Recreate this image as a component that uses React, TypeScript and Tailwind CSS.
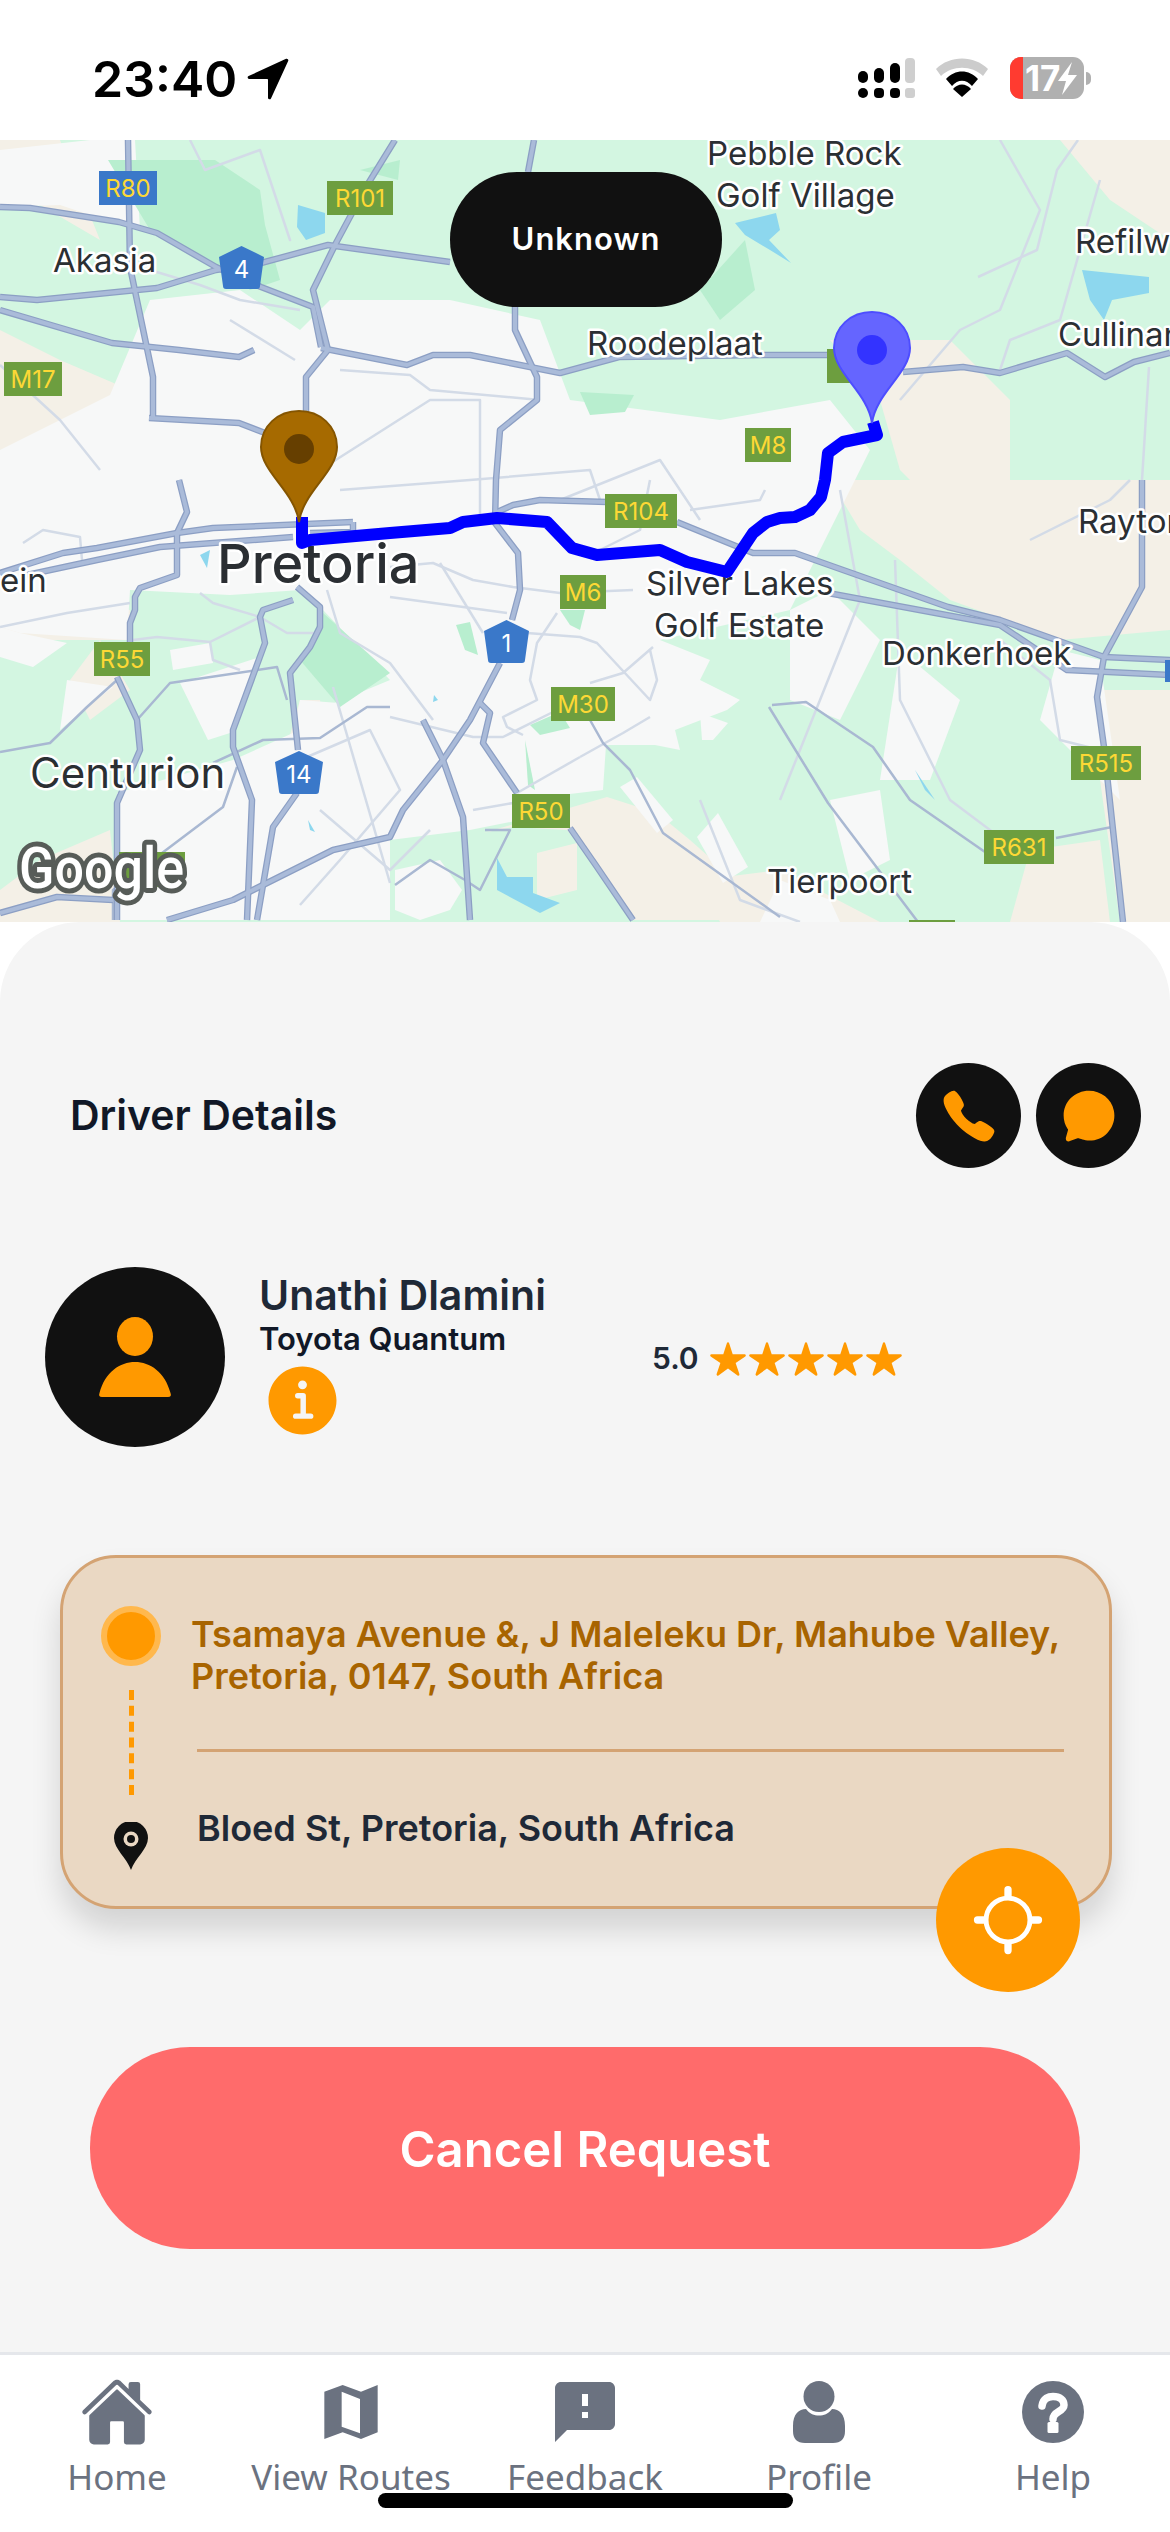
import { IoCall, IoChatbubble, IoHome, IoInformationCircle, IoLocateOutline, IoNavigate, IoStar } from "react-icons/io5";
import { MdFeedback } from "react-icons/md";

const ORANGE = "#ff9900";

const tan = [
  "0,140 60,140 100,240 40,205 0,207",
  "0,330 60,360 130,390 110,430 0,450",
  "830,340 950,340 1010,400 1010,520 950,520 900,470 880,400",
  "1060,140 1170,140 1170,240 1110,200",
  "830,480 1170,480 1170,630 1060,640 950,600 900,560 860,530",
  "1100,690 1170,690 1170,922 1120,922 1100,780",
  "1030,850 1100,840 1110,922 1010,922",
  "483,833 607,797 657,813 690,840 743,887 780,920 633,920 597,867 567,830 513,827",
  "537,853 577,843 577,890 537,900",
  "700,880 780,870 880,922 720,922",
  "390,700 423,720 423,800 390,813",
  "540,720 590,720 600,790 560,790",
  "0,500 137,500 137,520 0,520",
  "0,625 90,605 130,610 130,640 0,640",
  "100,640 130,690 90,720 70,680",
  "40,860 110,830 120,922 0,922 0,890",
  "300,700 320,700 325,725 290,735",
];
const urban = [
  "0,150 90,140 135,140 140,230 120,225 60,205 0,207",
  "0,450 110,395 150,300 240,290 300,330 330,300 450,300 540,320 570,400 720,420 830,400 870,450 790,610 660,640 710,660 700,680 740,700 727,710 675,730 680,750 705,755 655,745 606,745 603,790 520,800 520,820 470,830 390,840 390,707 330,705 390,680 323,610 300,590 230,595 130,590 127,640 20,633 0,627",
  "300,700 390,707 390,920 117,920 117,793 233,760 293,733",
  "170,650 210,643 213,663 173,670",
  "180,683 260,657 230,733 208,740",
  "67,680 113,687 87,707 60,730",
  "0,627 20,633 67,643 33,667 0,657",
  "395,870 440,860 462,890 450,910 420,920 395,910",
  "700,713 728,723 713,740 702,740",
  "697,837 718,813 748,867 723,883",
  "620,787 637,777 673,820 657,833",
  "790,610 830,590 880,640 840,720 790,700",
  "900,650 960,700 930,780 880,780",
  "1060,650 1100,660 1120,800 1040,720",
  "830,800 880,790 890,860 850,880",
  "780,880 830,900 840,922 760,922",
];
const deepGreen = [
  "108,160 215,160 260,190 265,225 280,280 250,290 210,260 150,230",
  "700,290 745,240 755,290 720,320",
  "323,613 390,673 340,707 300,660",
  "580,392 634,395 625,412 590,415",
  "456,625 470,622 478,655 465,650",
  "560,610 585,610 580,630 570,625",
  "530,725 560,712 570,728 540,735",
  "525,740 535,790 528,785",
  "360,170 400,160 398,180",
];
const water = [
  "298,205 325,213 325,233 306,240 297,227",
  "735,223 776,213 780,230 769,240 791,263 770,250 745,235",
  "1082,270 1149,277 1149,293 1112,300 1104,320 1090,300",
  "497,858 507,877 533,877 533,893 560,903 540,913 497,890",
  "915,770 935,800 925,790",
  "200,555 210,550 207,568",
  "434,695 438,700 433,702",
  "308,820 315,832 310,830",
];
const mainRoads = [
  "0,207 30,208 119,222 157,233 216,267 261,287 313,307 321,347",
  "0,297 37,300 157,288 216,270 261,263 328,245 450,262",
  "128,140 130,267 153,377 153,417",
  "0,310 112,343 179,350 239,357 254,350",
  "149,418 239,423 265,433",
  "321,348 407,365 433,355 470,355 560,373 619,357 769,355 843,355",
  "903,372 963,367 1000,373 1067,353 1105,377 1134,362 1170,353",
  "515,307 515,330 537,377 537,400 500,430 496,480 495,523 518,553 520,590 512,620",
  "500,663 470,720 443,760 403,810 390,837 333,850 233,900 167,920",
  "423,720 443,760 463,817 470,920",
  "534,140 528,172",
  "395,140 366,187 336,243 313,290 328,350 306,377 306,413",
  "0,573 63,553 97,548 177,533 213,528 353,522",
  "27,575 97,560 160,547 293,537",
  "353,522 353,532 310,533",
  "495,513 513,505 540,500 607,502",
  "677,522 753,553 795,553 843,570 948,607 1000,620 1104,657 1170,660",
  "828,593 1000,625 1067,670 1170,675",
  "179,480 187,512 177,533 177,575 140,588 135,597 135,610 130,623 130,643",
  "117,677 137,720 140,750 117,803 117,920",
  "293,600 263,610 260,617 265,643 233,730 233,747 252,800 247,920",
  "297,587 320,607 320,627 310,647 290,673 298,750",
  "297,793 273,827 257,920",
  "480,703 490,713 483,743 517,793",
  "570,828 597,867 633,920",
  "1142,480 1142,587 1104,657 1097,697 1104,747 1123,922",
  "0,913 57,897 113,900",
];
const mediumRoads = [
  "117,680 87,707 50,743 0,752",
  "137,720 170,683 277,667 287,700",
  "213,763 263,740 320,738 367,707 390,707",
  "237,767 223,807 170,847 113,890 113,920",
  "772,705 806,702 873,747 910,800 985,852",
  "590,720 603,743 630,770 663,833 780,917",
  "769,707 828,803 918,922",
  "1112,827 1056,838",
  "485,830 510,830 480,890 465,880 430,860 395,885",
];
const thinRoads = [
  "978,277 1037,250 1057,170 1078,140",
  "1149,367 1142,480",
  "150,270 200,285 240,300 300,310",
  "230,320 295,360",
  "340,370 410,375 430,390 540,400",
  "190,140 205,170 260,150 290,240 270,180",
  "320,470 430,400 480,400 480,520",
  "340,490 470,480 590,470 600,500",
  "560,500 660,460 700,520",
  "0,627 67,613 130,603",
  "133,640 157,637 210,642 213,660 240,670",
  "210,642 260,617",
  "200,593 213,603 260,617 287,633 317,633",
  "23,543 43,530 80,537 82,560",
  "327,590 340,633 390,663 433,720",
  "333,687 390,883",
  "390,567 433,563 473,580 513,587 560,593 633,590",
  "440,563 483,633",
  "390,597 507,613",
  "527,633 580,637 597,643 650,700 657,680 650,650",
  "557,613 537,643 530,680 537,700 503,717 507,727 523,735",
  "390,717 473,737 503,737 557,710",
  "590,683 623,673 653,647",
  "580,757 623,733 650,717",
  "517,793 580,757",
  "473,810 513,803",
  "300,760 370,730 400,790 340,860 300,905",
  "320,810 390,870 430,830",
  "690,510 760,500 765,490",
  "650,480 640,530 600,550",
  "840,490 860,600 780,800",
  "1000,140 1040,210 1000,310 960,330 900,400",
  "1000,370 1010,340 1060,320 1100,180",
  "1030,540 1110,500 1130,480",
  "895,560 900,700 950,800 1030,860",
  "1000,640 1050,680 1060,740 1100,750",
  "0,365 60,420 100,470",
  "700,800 740,900 800,922",
];
const labels: [string, number, number, number?, number?][] = [
  ["Pebble Rock", 707, 165],
  ["Golf Village", 716, 207],
  ["Akasia", 53, 272],
  ["Refilw", 1075, 253],
  ["Roodeplaat", 587, 355],
  ["Cullinan", 1058, 346],
  ["Rayton", 1078, 533],
  ["Pretoria", 217, 583, 54, 500],
  ["ein", 0, 592],
  ["Silver Lakes", 646, 595],
  ["Golf Estate", 654, 637],
  ["Donkerhoek", 882, 665],
  ["Centurion", 30, 788, 42],
  ["Tierpoort", 767, 893],
];
const badges: [string, number, number, number, boolean?][] = [
  ["R80", 99, 171, 58, true],
  ["R101", 327, 181, 66],
  ["M17", 4, 362, 58],
  ["M8", 745, 428, 46],
  ["R104", 605, 494, 72],
  ["M6", 560, 575, 46],
  ["R55", 94, 642, 56],
  ["M30", 551, 687, 64],
  ["R515", 1071, 746, 70],
  ["R50", 512, 794, 58],
  ["R631", 984, 830, 70],
];
const shields: [string, number, number, number][] = [
  ["4", 219, 246, 45],
  ["1", 484, 620, 45],
  ["14", 275, 751, 48],
];
const route =
  "302,517 302,543 310,540 390,533 450,528 463,522 497,518 547,522 572,548 597,555 660,550 687,562 727,572 753,533 767,522 780,518 795,517 810,510 821,497 825,480 828,453 843,442 877,435 873,422";

function Pin({ x, y, fill, stroke, inner }: { x: number; y: number; fill: string; stroke: string; inner: string }) {
  // x,y is the tip of the pin
  return (
    <g transform={`translate(${x} ${y})`}>
      <path
        d="M0 0C-4 -30 -38 -50 -38 -75C-38 -96 -21 -111 0 -111C21 -111 38 -96 38 -75C38 -50 4 -30 0 0Z"
        fill={fill}
        stroke={stroke}
        strokeWidth="2"
      />
      <circle cx="0" cy="-73" r="15" fill={inner} />
    </g>
  );
}

function MapArt() {
  return (
    <svg viewBox="0 140 1170 782" className="block h-full w-full">
      <rect x="0" y="140" width="1170" height="782" fill="#d3f6e1" />
      {tan.map((p) => (
        <polygon key={p} points={p} fill="#f4f0e7" />
      ))}
      {urban.map((p) => (
        <polygon key={p} points={p} fill="#f7f8f8" />
      ))}
      {deepGreen.map((p) => (
        <polygon key={p} points={p} fill="#b8eecf" />
      ))}
      {water.map((p) => (
        <polygon key={p} points={p} fill="#8dd7ee" />
      ))}
      {thinRoads.map((p) => (
        <polyline key={p} points={p} fill="none" stroke="#d3dbe7" strokeWidth="2.5" strokeLinejoin="round" />
      ))}
      {mediumRoads.map((p) => (
        <polyline key={p} points={p} fill="none" stroke="#a9b8d2" strokeWidth="2.5" strokeLinejoin="round" />
      ))}
      {mainRoads.map((p) => (
        <polyline key={p} points={p} fill="none" stroke="#8c9fc4" strokeWidth="6.5" strokeLinejoin="round" />
      ))}
      {mainRoads.map((p) => (
        <polyline key={p} points={p} fill="none" stroke="#aabbd9" strokeWidth="4" strokeLinejoin="round" />
      ))}
      <rect x="827" y="349" width="40" height="34" fill="#6d9e3f" />
      <rect x="909" y="920" width="46" height="2" fill="#6d9e3f" />
      <rect x="119" y="852" width="66" height="35" fill="#6d9e3f" />
      <rect x="1165" y="660" width="5" height="22" fill="#3a78c9" />
      {badges.map(([t, x, y, w, blue]) => (
        <g key={t}>
          <rect x={x} y={y} width={w} height="34" fill={blue ? "#3a78c9" : "#6d9e3f"} />
          <text x={x + w / 2} y={y + 26} textAnchor="middle" fontSize="24" fill="#fdd835" fontFamily="Inter, sans-serif">
            {t}
          </text>
        </g>
      ))}
      {shields.map(([t, x, y, w]) => (
        <g key={t} transform={`translate(${x} ${y})`}>
          <path d={`M${w / 2} 0L${w} 11L${w - 4} 40Q${w - 4} 43 ${w - 7} 43L7 43Q4 43 4 40L0 11Z`} fill="#3a78c9" />
          <text x={w / 2} y="32" textAnchor="middle" fontSize="24" fill="#ffffff" fontFamily="Inter, sans-serif">
            {t}
          </text>
        </g>
      ))}
      {labels.map(([t, x, y, size, weight]) => (
        <text
          key={t}
          x={x}
          y={y}
          fontSize={size ?? 33}
          fontWeight={weight ?? 400}
          fontFamily="Inter, sans-serif"
          fill="#2b2f33"
          stroke="#ffffff"
          strokeWidth="5"
          strokeLinejoin="round"
          paintOrder="stroke"
        >
          {t}
        </text>
      ))}
      <polyline points={route} fill="none" stroke="#0000ff" strokeWidth="12" strokeLinejoin="round" />
      <Pin x={299} y={522} fill="#a66a00" stroke="#855500" inner="#663f00" />
      <Pin x={872} y={423} fill="#6565ff" stroke="#4d4dff" inner="#3333ff" />
      <text
        x="19"
        y="888"
        fontSize="58"
        fontWeight="500"
        textLength="165"
        lengthAdjust="spacingAndGlyphs"
        fontFamily="Roboto, sans-serif"
        fill="#ffffff"
        stroke="#575c58"
        strokeWidth="10"
        strokeLinejoin="round"
        paintOrder="stroke"
      >
        Google
      </text>
    </svg>
  );
}

function StatusIcons() {
  return (
    <div className="flex items-center">
      <svg width="60" height="42" viewBox="0 0 60 42" className="block">
        <g fill="#000000">
          <rect x="2" y="14" width="10" height="12" rx="5" />
          <rect x="18" y="11" width="10" height="15" rx="5" />
          <rect x="34" y="6" width="10" height="20" rx="5" />
          <rect x="2" y="31" width="10" height="10" rx="5" />
          <rect x="18" y="31" width="10" height="10" rx="4" />
          <rect x="34" y="31" width="10" height="10" rx="4" />
        </g>
        <rect x="49" y="1" width="10" height="25" rx="4" fill="#cfcfcf" />
        <rect x="49" y="31" width="10" height="10" rx="3" fill="#cfcfcf" />
      </svg>
      <svg width="52" height="40" viewBox="0 0 52 40" className="ml-[20px] block">
        <path d="M0 11C14 -3 38 -3 52 11L47 18C36 7 16 7 5 18Z" fill="#cccccc" />
        <path d="M10 21C19 11 33 11 42 21L36 28C30 21 22 21 16 28Z" fill="#000000" />
        <path d="M26 39L17 31C22 25 30 25 35 31Z" fill="#000000" />
      </svg>
      <svg width="74" height="42" viewBox="0 0 74 42" className="ml-[22px] block">
        <rect x="0" y="0" width="74" height="42" rx="11" fill="#b0b0b0" />
        <path d="M11 0H13V42H11A11 11 0 0 1 0 31V11A11 11 0 0 1 11 0Z" fill="#ff3b30" />
        <text x="15" y="34" fontSize="35" fontWeight="700" fontFamily="Inter, sans-serif" fill="#ffffff">
          17
        </text>
        <path d="M62 5L48 24H56L52 38L67 18H58Z" fill="#ffffff" />
      </svg>
      <div className="ml-[2px] h-[13px] w-[5px] rounded-r-full bg-[#b0b0b0]" />
    </div>
  );
}

function RoutesIcon() {
  return (
    <svg width="54" height="54" viewBox="0 0 160 162" className="block">
      <path
        fillRule="evenodd"
        d="M0 20L55 0L110 20L160 0V142L110 162L55 142L0 162ZM52 20V125L107 145V42Z"
        fill="currentColor"
      />
    </svg>
  );
}

function ProfileIcon() {
  return (
    <svg width="52" height="62" viewBox="0 0 52 62" className="block">
      <circle cx="26" cy="15.5" r="15.5" fill="currentColor" />
      <path
        d="M0 50V45C0 33 6 28 13 28C17 33 21 34.5 26 34.5C31 34.5 35 33 39 28C46 28 52 33 52 45V50Q52 62 40 62H12Q0 62 0 50Z"
        fill="currentColor"
      />
    </svg>
  );
}

function HelpIcon() {
  return (
    <svg width="62" height="62" viewBox="0 0 62 62" className="block">
      <circle cx="31" cy="31" r="31" fill="currentColor" />
      <path d="M20 25C21 17 27 15.5 31 15.5C38 15.5 42 19 42 24C42 31 31 30 31 38" fill="none" stroke="#ffffff" strokeWidth="7.5" strokeLinecap="round" />
      <rect x="25.5" y="41" width="11" height="11" rx="1.5" fill="#ffffff" />
    </svg>
  );
}

function AvatarIcon() {
  return (
    <svg width="74" height="80" viewBox="0 0 74 80" className="block">
      <ellipse cx="37" cy="19.5" rx="18" ry="19.5" fill={ORANGE} />
      <path d="M4 80Q0 80 1.5 76C7 55 22 45 37 45C52 45 67 55 72.5 76Q74 80 70 80Z" fill={ORANGE} />
    </svg>
  );
}

function NavItem({ label, icon }: { label: string; icon: React.ReactNode }) {
  return (
    <div className="flex w-[234px] flex-col items-center">
      <div className="flex h-[80px] items-center justify-center text-[#6b7280]">{icon}</div>
      <span className="mt-[3px] text-[35px] leading-[44px] text-[#6b7280] font-['Noto_Sans',sans-serif]">{label}</span>
    </div>
  );
}

export default function App() {
  return (
    <div className="relative flex h-[2532px] w-[1170px] flex-col overflow-hidden bg-white font-[Inter,sans-serif]">
      <div className="flex h-[140px] items-start justify-between pl-[92px] pr-[79px] pt-[54px]">
        <div className="flex items-center">
          <span className="text-[50px] font-semibold leading-[46px] text-black">23:40</span>
          <IoNavigate size={50} className="ml-[6px] text-black" />
        </div>
        <div className="pt-[3px]">
          <StatusIcons />
        </div>
      </div>

      <div className="relative h-[782px]">
        <MapArt />
        <div className="absolute left-[450px] top-[32px] flex h-[135px] w-[272px] items-center justify-center rounded-[67px] bg-[#111111]">
          <span className="text-[31px] font-semibold tracking-[1px] text-white">Unknown</span>
        </div>
      </div>

      <div className="flex-1 rounded-t-[80px] bg-[#f5f5f5] pt-[141px]">
        <div className="flex items-center justify-between pl-[70px] pr-[29px]">
          <h2 className="text-[41px] font-semibold text-[#111827]">Driver Details</h2>
          <div className="flex gap-[15px]">
            <div className="flex h-[105px] w-[105px] items-center justify-center rounded-full bg-[#111111]">
              <IoCall size={58} color={ORANGE} />
            </div>
            <div className="flex h-[105px] w-[105px] items-center justify-center rounded-full bg-[#111111]">
              <IoChatbubble size={58} color={ORANGE} />
            </div>
          </div>
        </div>

        <div className="ml-[45px] mt-[99px] flex h-[180px] items-start">
          <div className="flex h-[180px] w-[180px] items-center justify-center rounded-full bg-[#111111]">
            <AvatarIcon />
          </div>
          <div className="ml-[34px] w-[393px] pt-[4px]">
            <p className="text-[41px] font-semibold leading-[48px] text-[#1f2937]">Unathi Dlamini</p>
            <p className="text-[31px] font-semibold leading-[40px] text-[#111827]">Toyota Quantum</p>
            <IoInformationCircle size={87} color={ORANGE} className="mt-[-2px]" />
          </div>
          <div className="mt-[69px] flex items-center">
            <span className="text-[30px] font-semibold text-[#1f2937]">5.0</span>
            <div className="ml-[10px] flex gap-[1px]">
              {[0, 1, 2, 3, 4].map((i) => (
                <IoStar key={i} size={38} color={ORANGE} />
              ))}
            </div>
          </div>
        </div>

        <div className="relative ml-[60px] mt-[108px] h-[354px] w-[1052px] rounded-[56px] border-[3px] border-[#d4a373] bg-[#ead8c3] shadow-[0_20px_30px_rgba(0,0,0,0.14)]">
          <div className="flex h-full">
            <div className="flex w-[134px] flex-col items-center pl-[2px] pt-[48px]">
              <div className="h-[60px] w-[60px] rounded-full border-[6px] border-[#ffb84d] bg-[#ff9900]" />
              <div className="mt-[24px] h-[105px] w-0 border-l-[5px] border-dashed border-[#ff9900]" />
              <svg width="34" height="48" viewBox="0 0 34 48" className="mt-[27px]">
                <path d="M17 48C13 36 0 27 0 16A17 17 0 0 1 34 16C34 27 21 36 17 48Z" fill="#111111" />
                <circle cx="17" cy="17" r="7.5" fill="#ead8c3" />
                <circle cx="17" cy="17" r="4" fill="#111111" />
              </svg>
            </div>
            <div className="w-[867px] pt-[55px]">
              <p className="-ml-[6px] text-[36px] font-semibold leading-[42px] text-[#a86400]">
                Tsamaya Avenue &amp;, J Maleleku Dr, Mahube Valley, Pretoria, 0147, South Africa
              </p>
              <div className="mt-[52px] h-[3px] bg-[#d4a373]" />
              <p className="mt-[55px] text-[36px] font-semibold leading-[42px] text-[#1f2937]">
                Bloed St, Pretoria, South Africa
              </p>
            </div>
          </div>
          <div className="absolute left-[873px] top-[290px] flex h-[144px] w-[144px] items-center justify-center rounded-full bg-[#ff9900]">
            <IoLocateOutline size={78} color="#ffffff" />
          </div>
        </div>

        <div className="ml-[90px] mt-[138px] flex h-[202px] w-[990px] items-center justify-center rounded-[100px] bg-[#ff6b6b] pt-[3px]">
          <span className="text-[49px] font-semibold text-white">Cancel Request</span>
        </div>
      </div>

      <div className="flex h-[180px] border-t-[3px] border-[#e5e7eb] bg-white pt-[17px]">
        <NavItem label="Home" icon={<IoHome size={74} />} />
        <NavItem label="View Routes" icon={<RoutesIcon />} />
        <NavItem label="Feedback" icon={<MdFeedback size={72} />} />
        <NavItem label="Profile" icon={<ProfileIcon />} />
        <NavItem label="Help" icon={<HelpIcon />} />
      </div>

      <div className="absolute left-[378px] top-[2493px] h-[15px] w-[415px] rounded-full bg-black" />
    </div>
  );
}
